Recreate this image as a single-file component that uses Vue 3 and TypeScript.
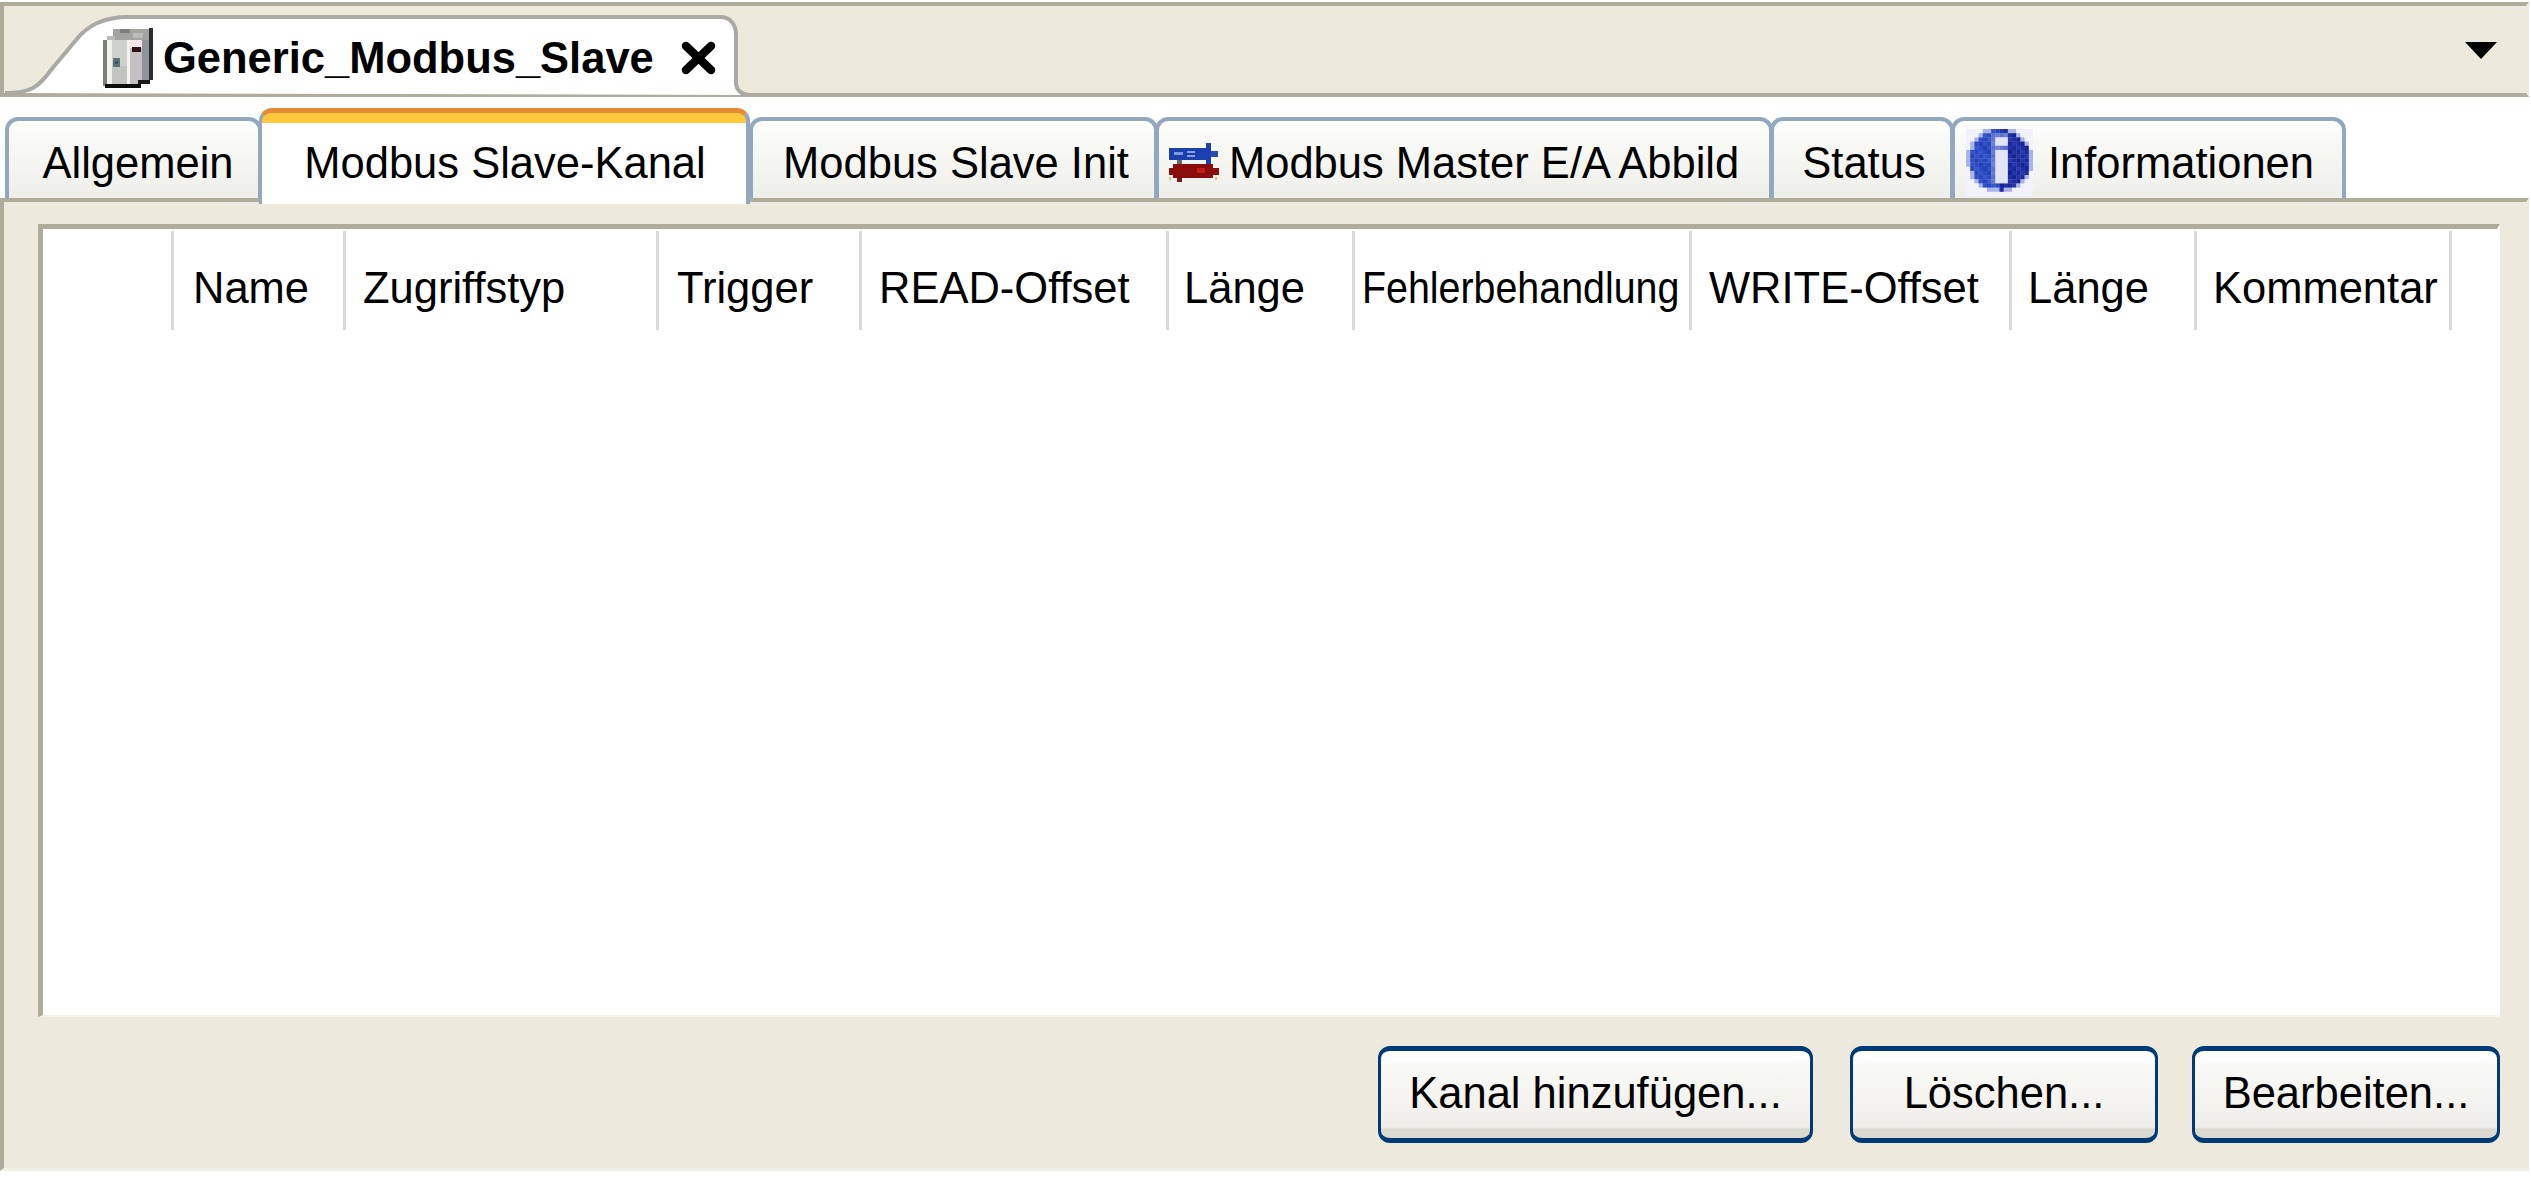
<script setup lang="ts">
interface Col { label: string; cls: string }
const columns: Col[] = [
  { label: '', cls: 'c0' },
  { label: 'Name', cls: 'c1' },
  { label: 'Zugriffstyp', cls: 'c2' },
  { label: 'Trigger', cls: 'c3' },
  { label: 'READ-Offset', cls: 'c4' },
  { label: 'Länge', cls: 'c5' },
  { label: 'Fehlerbehandlung', cls: 'c6' },
  { label: 'WRITE-Offset', cls: 'c7' },
  { label: 'Länge', cls: 'c8' },
  { label: 'Kommentar', cls: 'c9' },
]

interface Px { x: number; y: number; fill: string }
const cell = 4.2
const infoPixels: Px[] = []
for (let r = 0; r < 16; r++) {
  for (let c = 0; c < 16; c++) {
    const px = (c + 0.5) * cell
    const py = (r + 0.5) * cell
    const dx = px - 34
    const dy = py - 31
    const d = Math.sqrt(dx * dx + (dy * dy))
    const noise = ((r * 7 + c * 13) % 5) * 5
    let fill = ''
    const inStem = Math.abs(dx) < 6 && py > 23 && py < 53
    const inDot = Math.abs(dx) < 6 && py > 7 && py < 18
    if (d > 33) fill = '#f1f2fb'
    else if (d > 30) fill = '#a9b3e6'
    else if (inStem || inDot) fill = '#dfe4f7'
    else if (Math.abs(dx) < 9 && (py > 20 && py < 56 || py > 4 && py < 21)) fill = `rgb(${90 + noise},${110 + noise},205)`
    else if (dx < 0) fill = `rgb(${35 + noise},${65 + noise},${185 + noise})`
    else fill = `rgb(${20 + noise},${35 + noise},${150 + noise})`
    infoPixels.push({ x: c * cell, y: r * cell, fill })
  }
}
</script>

<template>
  <div class="page">
    <header class="doc-bar">
      <svg class="doc-shape" viewBox="4 6 750 91" width="750" height="91" aria-hidden="true">
        <path d="M5 93 C30 93 38 88 51 70 L76 40 C90 22 108 17 128 17 L720 17 C730 17 736 24 736 35 L736 83 C736 90 742 95 750 95" fill="#fff" stroke="#a9a9a5" stroke-width="4" />
      </svg>
      <div class="doc-tab">
        <svg class="device" viewBox="103 28 50 60" width="50" height="60" shape-rendering="crispEdges" aria-hidden="true">
          <rect x="113" y="29" width="37" height="13" fill="#a3a3a0" />
          <rect x="120" y="29" width="10" height="4" fill="#7e7e7c" />
          <rect x="133" y="33" width="10" height="5" fill="#bbbbb8" />
          <rect x="107" y="36" width="8" height="6" fill="#b9bab6" />
          <rect x="149" y="28" width="4" height="52" fill="#2c2c2c" />
          <rect x="103" y="40" width="4" height="46" fill="#7d8078" />
          <rect x="107" y="40" width="5" height="46" fill="#eef2e8" />
          <rect x="112" y="40" width="15" height="46" fill="#ced0cc" />
          <rect x="112" y="66" width="15" height="18" fill="#c2c4c0" />
          <rect x="127" y="40" width="3" height="44" fill="#f3f1f1" />
          <rect x="130" y="40" width="12" height="8" fill="#f6e4ea" />
          <rect x="130" y="48" width="12" height="36" fill="#c4c0c2" />
          <rect x="142" y="40" width="7" height="40" fill="#8d929c" />
          <rect x="113" y="58" width="7" height="9" fill="#617077" />
          <rect x="115" y="61" width="3" height="3" fill="#2f5570" />
          <rect x="132" y="47" width="9" height="5" fill="#2c1518" />
          <rect x="105" y="84" width="36" height="4" fill="#0e0e0e" />
          <rect x="138" y="80" width="12" height="4" fill="#1a1a1a" />
        </svg>
        <span class="doc-title">Generic_Modbus_Slave</span>
        <svg class="close" viewBox="0 0 35 34" width="35" height="34" aria-hidden="true">
          <path d="M5 5 L30 29 M30 5 L5 29" fill="none" stroke="#000" stroke-width="8.5" stroke-linecap="round" />
        </svg>
      </div>
      <svg class="menu-arrow" viewBox="0 0 32 17" width="32" height="17" aria-hidden="true">
        <path d="M0 0 H32 L16 17 Z" fill="#000" />
      </svg>
    </header>

    <nav class="tabs">
      <div class="tab t-general"><span>Allgemein</span></div>
      <div class="tab active t-channel"><span>Modbus Slave-Kanal</span></div>
      <div class="tab t-init"><span>Modbus Slave Init</span></div>
      <div class="tab t-map">
        <svg class="map-icon" viewBox="1170 143 50 39" width="50" height="39" shape-rendering="crispEdges" aria-hidden="true">
          <rect x="1170" y="148" width="40" height="12" fill="#1c3fb0" />
          <rect x="1207" y="143" width="5" height="21" fill="#1c3fb0" />
          <rect x="1212" y="151" width="7" height="6" fill="#2a4ab8" />
          <rect x="1175" y="152" width="9" height="3" fill="#7c99e0" />
          <rect x="1188" y="151" width="8" height="2" fill="#86a0e4" />
          <rect x="1188" y="155" width="8" height="2" fill="#86a0e4" />
          <rect x="1178" y="160" width="5" height="5" fill="#6f6a6c" />
          <rect x="1174" y="164" width="40" height="14" fill="#8a0e0e" />
          <rect x="1170" y="168" width="50" height="7" fill="#8a0e0e" />
          <rect x="1198" y="168" width="8" height="5" fill="#c01f16" />
          <rect x="1178" y="178" width="5" height="4" fill="#7a1a1a" />
          <rect x="1170" y="177" width="2" height="3" fill="#f2b070" />
          <rect x="1216" y="177" width="2" height="3" fill="#f2b070" />
        </svg>
        <span>Modbus Master E/A Abbild</span>
      </div>
      <div class="tab t-status"><span>Status</span></div>
      <div class="tab t-info">
        <svg class="info-icon" viewBox="0 0 67.2 67.2" width="67" height="67" aria-hidden="true">
          <rect v-for="(p, i) in infoPixels" :key="i" :x="p.x" :y="p.y" width="4.5" height="4.5" :fill="p.fill" />
        </svg>
        <span>Informationen</span>
      </div>
    </nav>

    <main class="panel">
      <section class="table">
        <div class="thead">
          <div v-for="col in columns" :key="col.cls" class="th" :class="col.cls">
            <span class="th-label">{{ col.label }}</span>
          </div>
        </div>
      </section>
      <footer class="actions">
        <button class="btn wide" type="button">Kanal hinzufügen...</button>
        <button class="btn" type="button">Löschen...</button>
        <button class="btn" type="button">Bearbeiten...</button>
      </footer>
    </main>
  </div>
</template>

<style>
html, body { margin: 0; background: #fff; }
</style>

<style scoped>
.page {
  width: 2531px;
  height: 1177px;
  padding-top: 2px;
  box-sizing: border-box;
  overflow: hidden;
  background: #fff;
  color: #000;
  font-family: "Liberation Sans", Arial, sans-serif;
  font-size: 43.5px;
}
.doc-bar {
  position: relative;
  box-sizing: border-box;
  width: 2529px;
  height: 95px;
  background: #ede9dd;
  border-top: 4px solid #b0ac9c;
  border-bottom: 4px solid #b0ac9c;
  border-left: 4px solid #b0ac9c;
  border-right: 3px solid #ede9dd;
  display: flex;
  justify-content: space-between;
}
.doc-shape {
  position: absolute;
  left: 0;
  top: 0;
  overflow: visible;
}
.doc-tab {
  position: relative;
  display: flex;
  align-items: flex-start;
  margin-left: 99px;
  padding-top: 22px;
}
.device { display: block; }
.doc-title {
  margin-left: 10px;
  margin-top: 5px;
  font-weight: 700;
  line-height: 50px;
  white-space: nowrap;
}
.close {
  margin-left: 27px;
  margin-top: 13px;
}
.menu-arrow {
  margin-top: 36px;
  margin-right: 29px;
}
.tabs {
  display: grid;
  grid-template-columns: 254px 490px 406px 615px 181px 392px;
  align-items: end;
  box-sizing: border-box;
  height: 101px;
  padding-left: 5px;
  background: #fff;
}
.tab {
  display: flex;
  align-items: center;
  justify-content: center;
  box-sizing: border-box;
  height: 81px;
  margin-right: -3px;
  border: 4px solid #93a8bf;
  border-bottom: 0;
  border-radius: 13px 13px 0 0;
  background: linear-gradient(#fdfdfb, #eeeeea);
  white-space: nowrap;
  line-height: 50px;
  padding-top: 6px;
}
.active {
  position: relative;
  z-index: 2;
  height: 96px;
  margin-bottom: -6px;
  margin-right: -1px;
  border-top: 5px solid #e38b33;
  border-left-width: 3px;
  border-right-width: 4px;
  background: linear-gradient(#ffc83d 0, #ffc83d 10px, #fff 10px);
  padding-top: 9px;
  padding-left: 2px;
}
.t-general { padding-left: 9px; }
.t-init { padding-left: 5px; }
.t-map { justify-content: flex-start; padding-left: 10px; }
.t-status { padding-left: 4px; }
.t-info { justify-content: flex-start; padding-left: 11px; }
.map-icon { margin-right: 10px; margin-top: 0; }
.info-icon { margin-right: 15px; margin-top: 0; }
.panel {
  position: relative;
  z-index: 1;
  box-sizing: border-box;
  width: 2529px;
  height: 973px;
  background: #ede9dd;
  border-top: 4px solid #b0ac9c;
  border-left: 4px solid #b0ac9c;
  border-right: 3px solid #ede9dd;
  border-bottom: 3px solid #f1efe6;
  padding: 22px 0 0 34px;
}
.table {
  box-sizing: border-box;
  width: 2462px;
  height: 793px;
  background: #fff;
  border-top: 5px solid #b0ac9c;
  border-left: 5px solid #b0ac9c;
  border-right: 3px solid #fff;
  border-bottom: 2px solid #f3f1e8;
}
.thead {
  display: grid;
  grid-template-columns: 131px 172px 313px 203px 307px 186px 337px 320px 185px 255px;
  margin-top: 2px;
}
.th {
  box-sizing: border-box;
  height: 99px;
  border-right: 3px solid #d9d9d9;
  padding: 27px 0 0 18px;
  line-height: 60px;
  white-space: nowrap;
}
.th-label { display: inline-block; }
.c1 { padding-left: 19px; }
.c2 { padding-left: 17px; }
.c4 { padding-left: 17px; }
.c5 { padding-left: 15px; }
.c6 { padding-left: 7px; }
.c6 .th-label {
  transform: scaleX(0.905);
  transform-origin: left center;
}
.c7 { padding-left: 17px; }
.c8 { padding-left: 16px; }
.c9 { padding-left: 16px; }
.actions {
  display: flex;
  justify-content: flex-end;
  gap: 34px;
  margin-top: 29px;
  padding-right: 26px;
}
.btn {
  box-sizing: border-box;
  width: 308px;
  height: 97px;
  padding: 0 0 3px;
  font: inherit;
  color: #000;
  border: 3px solid #003b77;
  border-top-width: 5px;
  border-bottom-width: 5px;
  border-radius: 12px;
  background: linear-gradient(#fff 0, #fff 8px, #f9f9f6 14px, #efeeea 76px, #dcd9cf 78px, #dcd9cf 100%);
}
.wide { width: 435px; margin-right: 3px; }
</style>
